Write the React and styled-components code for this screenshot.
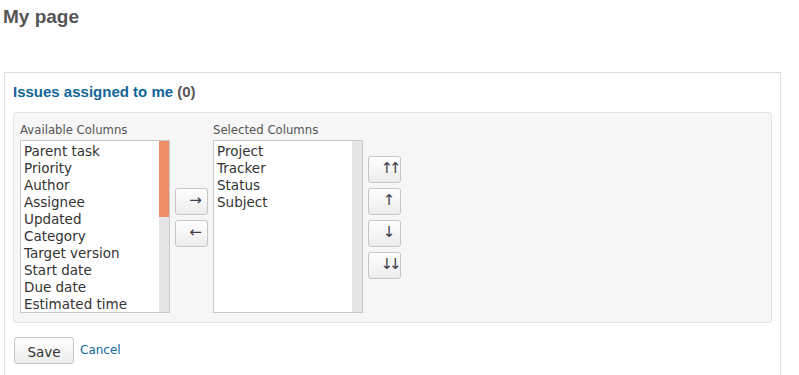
import React from "react";
import styled, { createGlobalStyle } from "styled-components";

const GlobalStyle = createGlobalStyle`
  html, body { margin: 0; padding: 0; background: #fff; }
  body { font-family: "DejaVu Sans", sans-serif; color: #333; }
  * { box-sizing: border-box; }
`;

const Page = styled.div`
  padding: 0 18px 0 4px;
`;

const Heading = styled.h2`
  margin: 0;
  padding: 5px 0 0 0;
  height: 72px;
  font-family: "Liberation Sans", sans-serif;
  font-size: 19px;
  font-weight: bold;
  color: #555;
  line-height: 24px;
  text-indent: -1px;
`;

const Box = styled.div`
  border: 1px solid #dddddd;
  border-bottom: none;
  padding: 8px 8px 30px 8px;
  height: 310px;
`;

const BoxTitle = styled.h3`
  margin: 0;
  height: 31px;
  padding-top: 3px;
  font-family: "Liberation Sans", sans-serif;
  font-size: 15px;
  font-weight: bold;
  line-height: 16px;
  color: #116699;
`;

const Count = styled.span`
  color: #555;
`;

const Fieldset = styled.div`
  background: #f6f6f6;
  border: 1px solid #e4e4e4;
  border-radius: 3px;
  padding: 8px 6px 9px 6px;
`;

const Row = styled.div`
  display: flex;
  align-items: center;
  gap: 5px;
`;

const ListBlock = styled.div`
  display: flex;
  flex-direction: column;
`;

const ListLabel = styled.div`
  font-size: 11.7px;
  line-height: 19px;
  height: 19px;
  color: #555;
  white-space: nowrap;
`;

const ListFrame = styled.div`
  width: 150px;
  height: 173px;
  border: 1px solid #c8c8c8;
  background: #fff;
  display: flex;
`;

const Items = styled.div`
  flex: 1;
  overflow: hidden;
  padding: 2px 0 0 3px;
  font-size: 13.5px;
  line-height: 17px;
  color: #333;
`;

const Scrollbar = styled.div`
  width: 10px;
  background: #e6e6e6;
  display: flex;
  flex-direction: column;
`;

const Thumb = styled.div`
  height: ${(p) => p.$size}px;
  background: #ef8e68;
`;

const Option = styled.div`
  white-space: nowrap;
`;

const ButtonCol = styled.div`
  display: flex;
  flex-direction: column;
  gap: 5px;
`;

const ArrowButton = styled.button`
  width: 33px;
  height: 27px;
  padding: 0 0 1px ${(p) => p.$shift}px;
  border: 1px solid #c6c6c6;
  border-radius: 3px;
  background: linear-gradient(#ffffff, #ececec);
  font-family: "DejaVu Sans", sans-serif;
  font-size: 15px;
  letter-spacing: ${(p) => (p.$double ? "-4px" : "0")};
  line-height: 1;
  color: #3a3a4a;
  display: flex;
  align-items: center;
  justify-content: center;
  cursor: pointer;
`;

const Actions = styled.div`
  display: flex;
  align-items: center;
  gap: 6px;
  margin-top: 14px;
  padding-left: 1px;
`;

const SaveButton = styled.button`
  width: 60px;
  height: 27px;
  border: 1px solid #c6c6c6;
  border-radius: 3px;
  background: linear-gradient(#ffffff, #ececec);
  font-family: "DejaVu Sans", sans-serif;
  font-size: 13.5px;
  line-height: 16px;
  color: #333;
  padding: 2px 0 0 0;
`;

const CancelLink = styled.a`
  font-family: "DejaVu Sans", sans-serif;
  font-size: 12px;
  line-height: 16px;
  color: #116699;
  text-decoration: none;
  margin-top: -2px;
`;

const available = [
  "Parent task", "Priority", "Author", "Assignee", "Updated", "Category",
  "Target version", "Start date", "Due date", "Estimated time",
];
const selected = ["Project", "Tracker", "Status", "Subject"];

export default function App() {
  return (
    <>
      <GlobalStyle />
      <Page>
        <Heading>My page</Heading>
        <Box>
          <BoxTitle>
            Issues assigned to me <Count>(0)</Count>
          </BoxTitle>
          <Fieldset>
            <Row>
              <ListBlock>
                <ListLabel>Available Columns</ListLabel>
                <ListFrame>
                  <Items>
                    {available.map((o) => <Option key={o}>{o}</Option>)}
                  </Items>
                  <Scrollbar>
                    <Thumb $size={76} />
                  </Scrollbar>
                </ListFrame>
              </ListBlock>
              <ButtonCol>
                <ArrowButton $shift={8}>&#8594;</ArrowButton>
                <ArrowButton $shift={8}>&#8592;</ArrowButton>
              </ButtonCol>
              <ListBlock>
                <ListLabel>Selected Columns</ListLabel>
                <ListFrame>
                  <Items>
                    {selected.map((o) => <Option key={o}>{o}</Option>)}
                  </Items>
                  <Scrollbar />
                </ListFrame>
              </ListBlock>
              <ButtonCol>
                <ArrowButton $shift={9} $double>&#8593;&#8593;</ArrowButton>
                <ArrowButton $shift={9}>&#8593;</ArrowButton>
                <ArrowButton $shift={9}>&#8595;</ArrowButton>
                <ArrowButton $shift={9} $double>&#8595;&#8595;</ArrowButton>
              </ButtonCol>
            </Row>
          </Fieldset>
          <Actions>
            <SaveButton>Save</SaveButton>
            <CancelLink href="#">Cancel</CancelLink>
          </Actions>
        </Box>
      </Page>
    </>
  );
}
